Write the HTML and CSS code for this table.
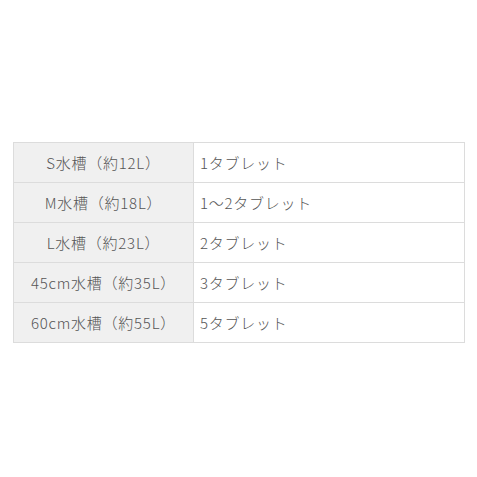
FILE: index.html
```html
<!DOCTYPE html>
<html lang="ja">
<head>
<meta charset="utf-8">
<link rel="stylesheet" href="styles.css">
</head>
<body>
<div class="page">
  <table class="spec">
    <tbody>
      <tr><th>S水槽（約12L）</th><td>1タブレット</td></tr>
      <tr><th>M水槽（約18L）</th><td>1〜2タブレット</td></tr>
      <tr><th>L水槽（約23L）</th><td>2タブレット</td></tr>
      <tr><th>45cm水槽（約35L）</th><td>3タブレット</td></tr>
      <tr><th>60cm水槽（約55L）</th><td>5タブレット</td></tr>
    </tbody>
  </table>
</div>
</body>
</html>
```

FILE: styles.css
```css
html, body {
  margin: 0;
  padding: 0;
  background: #fff;
}
.page {
  padding: 142px 13px 0 13px;
}
.spec {
  width: 452px;
  border-collapse: collapse;
  font-family: "Noto Sans CJK JP", "Noto Sans", sans-serif;
  font-size: 15px;
  font-weight: 300;
  color: #555;
  letter-spacing: 0.05em;
}
.spec th,
.spec td {
  height: 40px;
  box-sizing: border-box;
  padding: 0 6px;
  border: 1px solid #dcdcdc;
  font-weight: 300;
  vertical-align: middle;
  line-height: 20px;
}
.spec th {
  width: 180px;
  background: #f0f0f0;
  text-align: center;
}
.spec td {
  text-align: left;
  background: #fff;
}
```
